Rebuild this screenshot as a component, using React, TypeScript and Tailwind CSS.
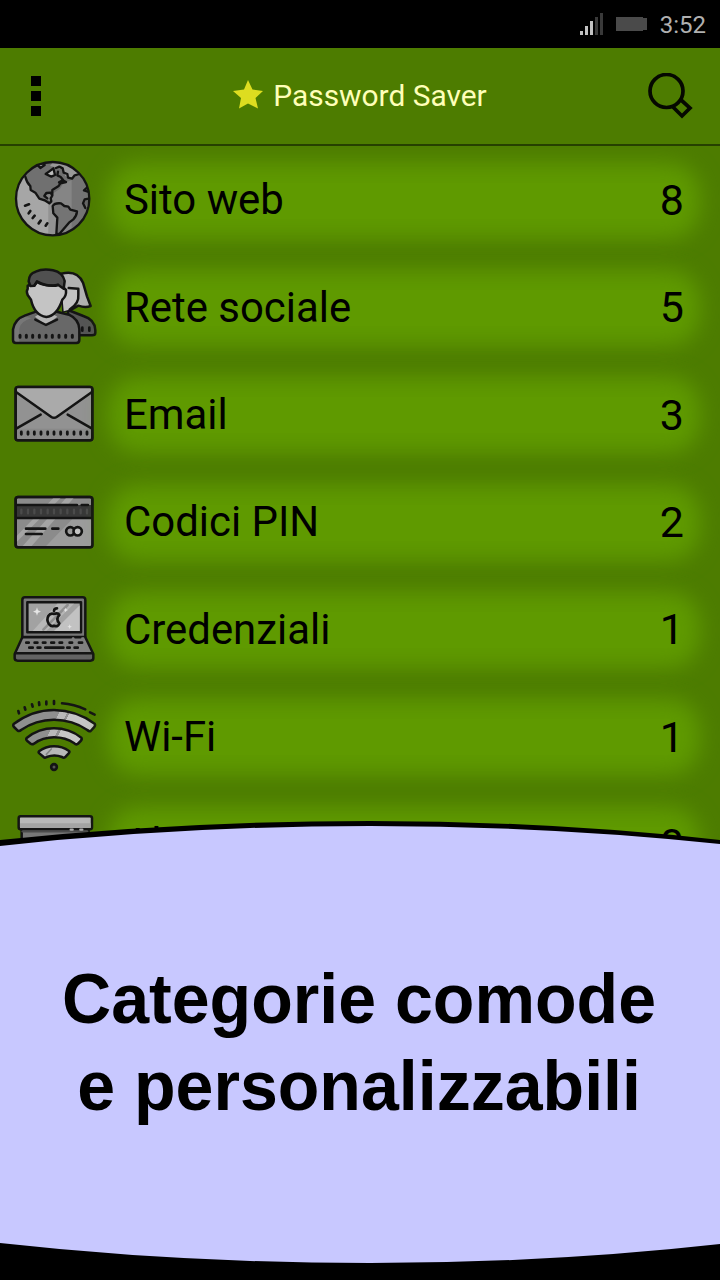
import type { ReactNode } from "react";

const INK = "#141414";

function Icon({ box, children }: { box: string; children: ReactNode }) {
  return (
    <svg
      viewBox={box}
      className="h-[107.33px] w-27 shrink-0"
      fill="none"
      stroke={INK}
      strokeWidth={7.5}
      strokeLinecap="round"
      strokeLinejoin="round"
      aria-hidden="true"
    >
      {children}
    </svg>
  );
}

function Globe() {
  return (
    <Icon box="0 -12 324 322">
      <defs>
        <clipPath id="globe">
          <circle cx="158" cy="146" r="111" />
        </clipPath>
      </defs>
      <g clipPath="url(#globe)" strokeWidth="7">
        <rect x="40" y="30" width="240" height="230" fill="#858585" stroke="none" />
        <path d="M215 30h60v230h-60z" fill="#747474" stroke="none" />
        <path d="M75 78Q82 112 106 128L125 148L153 160L168 195L170 260H40V78z" fill="#a6a6a6" stroke="none" />
        <path d="M145 160L160 165L168 195L170 260H145z" fill="#929292" stroke="none" />
        <path d="M75 78L100 45L140 36L200 50L215 90L190 100L180 116L160 130L135 136L153 160L130 152L106 128Q82 112 75 78" fill="#707070" stroke="none" />
        <path d="M160 36Q215 40 238 72L222 80L210 88L196 78L188 58L168 52L150 48z" fill="#999" stroke="none" />
        <path d="M76 80Q80 98 91 108L92 120L106 128L118 146L134 151L148 160M134 151L148 160L154 154L152 145L157 137L152 128L139 129L133 138L142 145M157 137L157 120L176 108L181 100L198 96L188 91L177 97M168 54L178 50L188 55L191 68L202 72L204 83L216 86L224 76L238 72M174 65L172 76L182 81L190 91" />
        <path d="M148 64L160 55L165 75L154 80L137 72z" fill="#bcbcbc" />
        <path d="M112 45L121 54L134 45L128 39z" fill="#bbb" />
        <path d="M158 168Q164 158 183 160L193 168L205 170L211 179L231 184Q230 198 220 208L207 218L178 252H169L172 203L160 190z" fill="#747474" />
        <path d="M266 108L252 121L266 126M266 146L254 148L249 160L256 174" fill="#666" />
        <path d="M75 167L87 163M86 190L91 183M98 204L104 197M116 220L122 212M137 227L142 220" strokeWidth="8" />
      </g>
      <circle cx="158" cy="146" r="110" strokeWidth="7" />
    </Icon>
  );
}

function People() {
  return (
    <Icon box="0 -5 324 322">
      <path d="M204 166L250 184Q284 194 286 226V235Q286 242 276 242H204z" fill="#555" />
      <path d="M184 57Q232 45 249 84L261 125L272 154Q256 160 235 153L215 164L190 170z" fill="#b2b2b2" />
      <path d="M185 98L237 100V123Q240 147 212 164L191 170z" fill="#c3c3c3" stroke="none" />
      <path d="M206 100L235 102V120Q238 146 209 165" />
      <path d="M247 219V228M268 219V228" strokeWidth="8" />
      <path d="M39 256V224Q44 193 76 182L110 170H164L207 180Q237 194 238 224V256Q238 265 229 265H48Q39 265 39 256z" fill="#686868" stroke="none" />
      <path d="M74 186Q44 196 42 229V262H58V222Q60 200 96 190z" fill="#777" stroke="none" />
      <path d="M39 256V224Q44 193 76 182L110 170H164L207 180Q237 194 238 224V256Q238 265 229 265H48Q39 265 39 256z" />
      <path d="M105 186L138 211L172 186L158 178H117z" fill="#b5b5b5" stroke="none" />
      <path d="M106 195L138 211L171 195" />
      <path d="M91 90L83 93L83 103Q78 109 83 121L93 135Q103 181 139 187Q171 184 187 135Q200 124 198 106L191 99V80L145 57L98 70z" fill="#c4c4c4" />
      <path d="M91 94L86 80Q87 56 107 51Q129 41 159 47Q188 53 194 79L191 102L175 91Q148 99 111 80L103 93z" fill="#505050" />
      <path d="M103 93L111 82Q138 98 174 90" />
      <path d="M60 242V248M79 242V248M98 242V248M118 242V248M138 242V248M157 242V248M177 242V248M197 242V248M217 242V248" strokeWidth="9" />
    </Icon>
  );
}

function Envelope() {
  return (
    <Icon box="0 -28 324 322">
      <rect x="47" y="50" width="230" height="160" rx="7" fill="#929292" />
      <path d="M50 53H274L270 70L170 140Q162 146 154 140L53 70z" fill="#aaa" stroke="none" />
      <path d="M51 175H273V207H51z" fill="#898989" stroke="none" />
      <path d="M48 65L153 139Q162 146 171 139L276 65M50 174L122 133M275 174L203 133" />
      <path d="M64 185V192M84 185V192M103 185V192M123 185V192M143 185V192M162 185V192M182 185V192M202 185V192M222 185V192M242 185V192M261 185V192" strokeWidth="8.500" />
      <rect x="47" y="50" width="230" height="160" rx="7" />
    </Icon>
  );
}

function Card() {
  return (
    <Icon box="0 294 324 322">
      <rect x="47" y="381" width="230" height="151" rx="7" fill="#8b8b8b" />
      <path d="M160 384H182L73 493L50 516V498zM198 384H221L93 530H66z" fill="#a5a5a5" stroke="none" />
      <path d="M217 447L136 530H276V447z" fill="#9c9c9c" stroke="none" />
      <path d="M49 405H275V444H49z" fill="#383838" stroke="none" />
      <path d="M49 405H231M245 405H264M49 444H275" />
      <path d="M64 419V430M84 419V430M103 419V430M123 419V430M143 419V430M162 419V430M182 419V430M202 419V430M222 419V430M242 419V430M261 419V430" stroke="#4b4b4b" strokeWidth="7" />
      <path d="M78 476H136M78 492H125M157 476H175" strokeWidth="8" />
      <circle cx="211" cy="484" r="12.500" strokeWidth="8" />
      <circle cx="233" cy="484" r="12.500" fill="#c4c4c4" strokeWidth="8" />
      <rect x="47" y="381" width="230" height="151" rx="7" />
    </Icon>
  );
}

function Laptop() {
  return (
    <Icon box="0 -29 324 322">
      <path d="M67 157V46Q67 38 75 38H248Q256 38 256 46V157z" fill="#777" />
      <rect x="82" y="53" width="161" height="90" fill="#a2a2a2" />
      <path d="M172 57H222L139 139H98z" fill="#b7b7b7" stroke="none" />
      <path d="M239 62V139H162z" fill="#c2c2c2" stroke="none" />
      <path d="M203 61L130 135" stroke="#8f8f8f" />
      <path d="M111 68L114 77L123 81L114 84L111 93L108 84L99 81L108 77zM197 69L199 74L204 76L199 78L197 83L195 78L190 76L195 74zM209 119L211 124L216 126L211 128L209 133L207 128L202 126L207 124z" fill="#e5e5e5" stroke="none" />
      <path d="M162 88Q174 83 178 91Q166 103 178 116Q174 128 162 123Q153 127 146 117Q139 105 145 94Q151 84 162 88zM162 79Q162 71 171 71" strokeWidth="8" />
      <path d="M67 158H256L280 208V221Q280 228 271 228H53Q44 228 44 221V208z" fill="#808080" stroke="none" />
      <path d="M47 208H278V218Q278 225 271 225H53Q46 225 46 218z" fill="#636363" stroke="none" />
      <path d="M67 158L44 208V221Q44 228 53 228H271Q280 228 280 221V208L256 158" />
      <path d="M46 206H278M67 158H213M226 158H241" />
      <path d="M79 174H86M104 174H112M129 174H136M154 174H162M179 174H186M209 174H216M237 174H246M88 189H98M113 189H121M136 189H190M202 189H209M224 189H233" strokeWidth="8.500" />
    </Icon>
  );
}

function Wifi() {
  return (
    <Icon box="0 -22 324 322">
      <defs>
        <linearGradient id="shine" gradientUnits="userSpaceOnUse" x1="90" y1="70" x2="245" y2="150">
          <stop offset=".44" stopColor="#8f8f8f" />
          <stop offset=".44" stopColor="#b9b9b9" />
          <stop offset=".56" stopColor="#b9b9b9" />
          <stop offset=".56" stopColor="#929292" />
          <stop offset=".6" stopColor="#929292" />
          <stop offset=".6" stopColor="#c6c6c6" />
          <stop offset="1" stopColor="#c6c6c6" />
        </linearGradient>
      </defs>
      <path d="M41 101Q97 59 162 59Q229 60 284 100Q287 106 282 111L272 122Q267 124 262 119Q218 88 162 88Q107 88 63 119Q58 124 53 121L42 110Q38 106 41 101z" fill="url(#shine)" />
      <path d="M80 143Q116 114 162 114Q208 114 244 142Q247 147 242 152L233 161Q228 164 223 159Q197 141 162 141Q128 141 102 160Q96 164 92 160L81 151Q77 147 80 143z" fill="url(#shine)" />
      <path d="M117 183Q137 168 162 168Q187 168 207 182Q210 185 206 189L195 201Q191 204 186 200Q163 191 140 200Q134 204 131 200L118 189Q114 186 117 183z" fill="#b8b8b8" />
      <path d="M154 176L139 192" stroke="#858585" strokeWidth="5" />
      <circle cx="162" cy="230" r="8.500" fill="#555" strokeWidth="8" />
      <path d="M55 62L57 69M74 51L76 58M96 42L98 49M117 36L118 44M139 34V42M162 32V41" strokeWidth="8" />
      <path d="M186 39Q222 42 256 57M270 66L284 73" />
    </Icon>
  );
}

function Box() {
  return (
    <Icon box="0 0 324 322">
      <path d="M65 118H266V220H65z" fill="#777" />
      <rect x="56" y="79" width="220" height="39" rx="6" fill="#b8b8b8" />
      <path d="M60 100H272V114H60z" fill="#a3a3a3" stroke="none" />
      <path d="M68 124H261" stroke="#4c4c4c" strokeWidth="7" />
      <path d="M212 119H218M241 119H247" stroke="#aaa" strokeWidth="7" />
    </Icon>
  );
}

const categories = [
  { name: "Sito web", count: 8, icon: <Globe /> },
  { name: "Rete sociale", count: 5, icon: <People /> },
  { name: "Email", count: 3, icon: <Envelope /> },
  { name: "Codici PIN", count: 2, icon: <Card /> },
  { name: "Credenziali", count: 1, icon: <Laptop /> },
  { name: "Wi-Fi", count: 1, icon: <Wifi /> },
  { name: "Altro", count: 0, icon: <Box /> },
];

function StatusBar() {
  return (
    <div className="flex h-12 shrink-0 items-center justify-end bg-black pr-3.5 text-[#b0b0b0]">
      <svg width="24" height="22" viewBox="0 0 24 22" className="mr-3" aria-hidden="true">
        <path d="M0 18h3v4H0zM5 13h3v9H5zM10 8h3v14h-3z" fill="#c2c2c2" />
        <path d="M15 4h3v18h-3zM20 0h3v22h-3z" fill="#393939" />
      </svg>
      <svg width="32" height="14" viewBox="0 0 32 14" className="mr-3" aria-hidden="true">
        <path d="M0 0h27v1h4v12h-4v1H0z" fill="#4a4a4a" />
      </svg>
      <span className="pt-0.5 text-[24px] leading-none">3:52</span>
    </div>
  );
}

function Header() {
  return (
    <header className="flex h-[98px] shrink-0 items-center justify-between border-b-2 border-[#264000] pr-[27px] pl-[31px]">
      <div className="flex w-[41px] flex-col gap-[5px]">
        <span className="size-2.5 bg-black" />
        <span className="size-2.5 bg-black" />
        <span className="size-2.5 bg-black" />
      </div>
      <div className="flex items-center gap-2.5">
        <svg width="30" height="29" viewBox="0 0 30 29" className="mb-1" aria-hidden="true">
          <path d="M15 0L19.500 9.500L30 11L22.500 18L25 28.500L15 23.500L6 28.500L8 18L0 11L11 9.500z" fill="#dddd20" />
        </svg>
        <h1 className="text-[29.900px] leading-none text-[#ffffb8]">Password Saver</h1>
      </div>
      <svg width="45" height="46" viewBox="0 0 45 46" fill="none" stroke="#050800" strokeWidth="3.700" aria-hidden="true">
        <circle cx="18.500" cy="18" r="16.500" />
        <path d="M32 26L42 35L34 43L25 34" />
      </svg>
    </header>
  );
}

export default function App() {
  return (
    <main className="relative flex h-[1280px] w-[720px] flex-col overflow-hidden bg-[#4d7c00] font-[Roboto,sans-serif]">
      <StatusBar />
      <Header />
      <ul className="flex min-h-0 flex-1 flex-col overflow-hidden">
        {categories.map((c) => (
          <li key={c.name} className="flex h-[107.33px] shrink-0 items-center">
            {c.icon}
            <div className="mt-0.5 mr-10 ml-5 flex h-9 flex-1 items-center justify-between rounded-xl bg-[#5f9a00] text-[41.900px] text-black shadow-[0_0_21px_20px_#5f9a00]">
              <span className="-ml-1">{c.name}</span>
              <span className="-mr-1 mb-px text-[43px]">{c.count}</span>
            </div>
          </li>
        ))}
      </ul>
      <section className="absolute inset-x-0 bottom-0 h-[460px]">
        <svg className="absolute inset-0" width="720" height="460" viewBox="0 0 720 460" aria-hidden="true">
          <path d="M0 20Q180 1 370 1Q550 1 720 20V460H0z" fill="#000" />
          <path d="M0 26Q180 6 370 6Q550 6 720 24V424Q550 443 370 443Q180 443 0 423z" fill="#c8c8ff" />
        </svg>
        <h2 className="relative scale-x-[0.955] pt-[135px] pr-0.5 text-center font-['Liberation_Sans',sans-serif] text-[71.300px] leading-[87px] font-bold text-black">
          Categorie comode
          <br />
          e personalizzabili
        </h2>
      </section>
    </main>
  );
}
